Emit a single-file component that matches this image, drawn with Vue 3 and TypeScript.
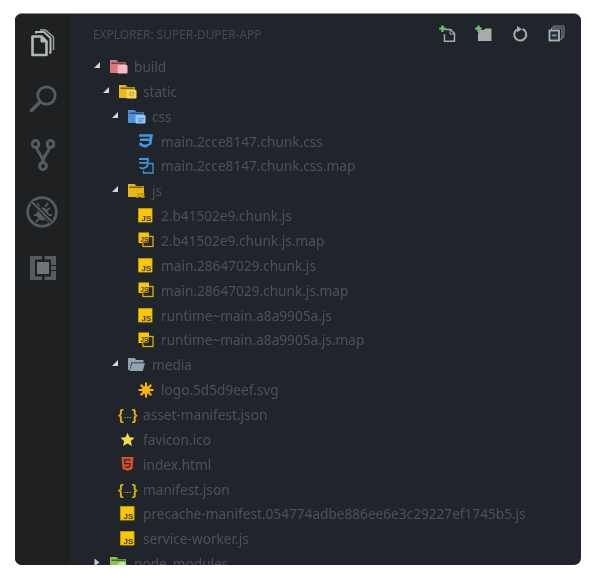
<script setup lang="ts">
type Row = { name: string; depth: number; icon: string; open?: boolean; folder?: boolean };
const rows: Row[] = [
  { name: 'build', depth: 0, icon: 'f-build', folder: true, open: true },
  { name: 'static', depth: 1, icon: 'f-static', folder: true, open: true },
  { name: 'css', depth: 2, icon: 'f-css', folder: true, open: true },
  { name: 'main.2cce8147.chunk.css', depth: 3, icon: 'css' },
  { name: 'main.2cce8147.chunk.css.map', depth: 3, icon: 'cssmap' },
  { name: 'js', depth: 2, icon: 'f-js', folder: true, open: true },
  { name: '2.b41502e9.chunk.js', depth: 3, icon: 'js' },
  { name: '2.b41502e9.chunk.js.map', depth: 3, icon: 'jsmap' },
  { name: 'main.28647029.chunk.js', depth: 3, icon: 'js' },
  { name: 'main.28647029.chunk.js.map', depth: 3, icon: 'jsmap' },
  { name: 'runtime~main.a8a9905a.js', depth: 3, icon: 'js' },
  { name: 'runtime~main.a8a9905a.js.map', depth: 3, icon: 'jsmap' },
  { name: 'media', depth: 2, icon: 'f-media', folder: true, open: true },
  { name: 'logo.5d5d9eef.svg', depth: 3, icon: 'svg' },
  { name: 'asset-manifest.json', depth: 1, icon: 'json' },
  { name: 'favicon.ico', depth: 1, icon: 'star' },
  { name: 'index.html', depth: 1, icon: 'html' },
  { name: 'manifest.json', depth: 1, icon: 'json' },
  { name: 'precache-manifest.054774adbe886ee6e3c29227ef1745b5.js', depth: 1, icon: 'js' },
  { name: 'service-worker.js', depth: 1, icon: 'js' },
  { name: 'node_modules', depth: 0, icon: 'f-node', folder: true },
];
const folderColors: Record<string, [string, string]> = {
  'f-build': ['#d9777c', '#f7bcc1'],
  'f-static': ['#eab80f', '#f3d568'],
  'f-css': ['#4a90dc', '#9cc8f2'],
  'f-js': ['#eab80f', '#f5d44a'],
  'f-node': ['#8bc34a', '#c5e1a5'],
};
</script>

<template>
  <div class="page">
    <div class="window">
      <nav class="activity">
        <div class="act-item">
          <svg width="24" height="28" viewBox="0 0 24 28" fill="none" stroke="#b2b7b5" stroke-width="2.600">
            <path d="M1.500 7.500h9l5 5v13.500h-14z" stroke-linejoin="round" />
            <path d="M10 8v5h5.500" fill="#b2b7b5" stroke-width="1" />
            <path d="M5 4.500V3h8l6.500 6v14.500h-1.500" stroke-width="2" />
            <path d="M9 1h5.500l8 7v13" stroke-width="1.500" opacity=".85" />
          </svg>
        </div>
        <div class="act-item">
          <svg width="28" height="28" viewBox="0 0 28 28" fill="none" stroke="#545c5f">
            <circle cx="17.500" cy="10.500" r="8.700" stroke-width="2.800" />
            <path d="M11 17L2.500 25.500" stroke-width="3.800" stroke-linecap="round" />
          </svg>
        </div>
        <div class="act-item">
          <svg width="24" height="32" viewBox="0 0 24 32" fill="none" stroke="#545c5f" stroke-width="3">
            <circle cx="4.500" cy="5" r="3.400" />
            <circle cx="19.500" cy="5" r="3.400" />
            <circle cx="12" cy="27" r="3.400" />
            <path d="M5.500 8.500C6.500 14 12 16 12 23.500M18.500 8.500C17.500 14 12 16 12 23.500" />
          </svg>
        </div>
        <div class="act-item">
          <svg width="32" height="32" viewBox="0 0 32 32" fill="none" stroke="#545c5f" class="bug">
            <circle cx="16" cy="16" r="14.300" stroke-width="2.800" />
            <ellipse cx="16.500" cy="18" rx="6" ry="6.500" fill="#545c5f" stroke="none" />
            <path d="M11 7l3 4M22 7l-3 4M24 12l-4 3M26 19h-5M8 19h4M10 26l3-3M23 26l-3-3" stroke-width="1.800" />
            <path d="M6 6l20 20" stroke="#1e2022" stroke-width="4.500" />
            <path d="M5.500 5.500l21 21" stroke-width="2" />
          </svg>
        </div>
        <div class="act-item">
          <svg width="26" height="26" viewBox="0 0 26 26" fill="#545c5f">
            <path d="M0 1h12v3.500H5v17h7V25H0zM14.500 1H26v9h-5V4.500h-6.500zM14.500 21.500H21V16h5v9H14.500z" />
            <rect x="7" y="7" width="12" height="12" fill="#6e7679" />
            <rect x="21" y="11" width="5" height="4" />
          </svg>
        </div>
      </nav>

      <section class="sidebar">
        <header class="head">
          <span class="title">EXPLORER: SUPER-DUPER-APP</span>
          <div class="tools">
            <svg width="17" height="17" viewBox="0 0 17 17" fill="none">
              <path d="M5.500 4.500h6l4 4v7.800h-10v-7" stroke="#a8acab" stroke-width="1.500" />
              <path d="M11 4.500v4.500h4.500" stroke="#a8acab" stroke-width="1" />
              <path d="M3.500 0.500v6.500M0.200 3.700h6.500" stroke="#6cc26c" stroke-width="2.300" />
            </svg>
            <svg width="17" height="17" viewBox="0 0 17 17">
              <path d="M5 5h3.500l2-1.500h6v12.500H3V8z" fill="#a8acab" />
              <path d="M3.500 0.500v6.500M0.200 3.700h6.500" stroke="#6cc26c" stroke-width="2.300" fill="none" />
            </svg>
            <svg width="17" height="17" viewBox="0 0 17 17" fill="none">
              <path d="M10.500 4A6 6 0 1 1 5 4.500" stroke="#a8acab" stroke-width="2" />
              <path d="M5 1l5 3.200-5 3z" fill="#a8acab" />
            </svg>
            <svg width="17" height="17" viewBox="0 0 17 17" fill="none">
              <path d="M5.500 3V1h10.500v11h-2" stroke="#7f8382" stroke-width="1" />
              <path d="M3.500 5V3h10.500v11h-2" stroke="#8d9190" stroke-width="1" />
              <rect x="1.500" y="5.500" width="9.500" height="10" fill="#2a3038" stroke="#b0b4b3" stroke-width="1.800" />
              <rect x="4" y="9.500" width="4.500" height="1.800" fill="#4f9fe0" />
            </svg>
          </div>
        </header>

        <div class="tree">
          <div v-for="r in rows" :key="r.name" class="row" :class="r.folder ? `fd${r.depth}` : `d${r.depth}`">
            <span class="twist" v-if="r.folder">
              <svg width="8" height="8" viewBox="0 0 8 8">
                <path v-if="r.open" d="M7 1v6H1z" fill="#d4d4d4" />
                <path v-else d="M1.500 0.500L6.500 4.500 1.500 8z" fill="#c8c8c8" />
              </svg>
            </span>

            <span class="ico" :class="{ fileico: !r.folder }">
              <svg v-if="folderColors[r.icon]" width="18" height="15" viewBox="0 0 18 15">
                <path d="M0 1h6.500l2 2H16v11H0z" :fill="folderColors[r.icon][0]" />
                <path d="M1.500 3.500h14v1.400h-14z" fill="#20252b" opacity=".6" />
                <rect v-if="r.icon === 'f-build' || r.icon === 'f-static' || r.icon === 'f-css'" x="7.500" y="6" width="10" height="8.500" rx="1" :fill="folderColors[r.icon][1]" />
                <rect v-if="r.icon === 'f-css'" x="10" y="9" width="6" height="1.300" fill="#4a90dc" />
                <rect v-if="r.icon === 'f-css'" x="10" y="11.500" width="5" height="1.300" fill="#4a90dc" />
                <circle v-if="r.icon === 'f-static'" cx="12.500" cy="10" r="2" fill="none" stroke="#c99d08" />
                <text v-if="r.icon === 'f-js'" x="7.500" y="14.500" class="jstxt" font-size="8" fill="#a98a10">JS</text>
                <circle v-if="r.icon === 'f-node'" cx="12" cy="11" r="5" :fill="folderColors[r.icon][1]" />
              </svg>

              <svg v-else-if="r.icon === 'f-media'" width="18" height="15" viewBox="0 0 18 15">
                <path d="M0 1h6.500l2 2H15.500v2.500H3.500L1.500 13H0z" fill="#90a4ae" />
                <path d="M4.200 6.200H17L14.700 14H1.500z" fill="#90a4ae" />
              </svg>

              <svg v-else-if="r.icon === 'js'" width="15" height="15" viewBox="0 0 15 15">
                <rect x="0.300" y="0.300" width="13.800" height="13.800" fill="#fbc800" stroke="#bf9a08" stroke-width=".6" />
                <text x="3.600" y="13" class="jstxt" font-size="8" fill="#3b3410">JS</text>
              </svg>

              <svg v-else-if="r.icon === 'jsmap'" width="16" height="16" viewBox="0 0 16 16">
                <rect x="5" y="4.500" width="10" height="10" fill="none" stroke="#dcb007" stroke-width="1.300" />
                <rect x="0.500" y="0.500" width="10.500" height="10.500" fill="#fbc800" />
                <path d="M11 5v6H5" stroke="#20252b" stroke-width="1" fill="none" />
                <text x="2.300" y="9.500" class="jstxt" font-size="6.800" fill="#3b3410">JS</text>
              </svg>

              <svg v-else-if="r.icon === 'css'" width="15" height="15" viewBox="0 0 15 15">
                <path d="M1.200 0.300H15L13.500 10.200 7.500 13.700 1.500 11.800 1.200 8.800h2.800l.2 1 3.100.9 3.500-1.200.4-2.500H1.800l.4-2.500h9.400l.3-1.700H1z" fill="#3f95e0" />
              </svg>

              <svg v-else-if="r.icon === 'cssmap'" width="16" height="16" viewBox="0 0 16 16" fill="none">
                <path d="M10 5.500H15V15H5.500v-2.500" stroke="#3f95e0" stroke-width="1.300" />
                <path d="M1 1h9l-.8 7.500-4.200 2-3.500-1M1.200 4.800h7.500" stroke="#3f95e0" stroke-width="1.800" />
              </svg>

              <svg v-else-if="r.icon === 'svg'" width="16" height="16" viewBox="0 0 16 16">
                <g stroke="#ffb300" stroke-width="2">
                  <path d="M8 0.500v15M0.500 8h15M2.700 2.700l10.600 10.600M13.300 2.700L2.700 13.300" />
                </g>
                <circle cx="8" cy="8" r="4" fill="#ffb300" />
              </svg>

              <svg v-else-if="r.icon === 'star'" width="15" height="15" viewBox="0 0 16 16">
                <path d="M8 0.800l2.200 4.800 5.300.6-3.900 3.500 1.100 5.200L8 12.300l-4.700 2.600 1.100-5.200L.5 6.200l5.300-.6z" fill="#f6d94a" />
              </svg>

              <svg v-else-if="r.icon === 'html'" class="html" width="13" height="16" viewBox="0 0 14 16">
                <path d="M0.500 0.500h13L12.400 13.500 7 15.500 1.600 13.500z" fill="#d6502a" />
                <path d="M10.200 3.500H3.800l.3 4h5.600l-.3 3.300L7 11.500l-2.400-.7" fill="none" stroke="#3a2320" stroke-width="1.300" />
              </svg>

              <span v-else-if="r.icon === 'json'" class="json">{<i>…</i>}</span>
            </span>

            <span class="name">{{ r.name }}</span>
          </div>
        </div>
      </section>
    </div>
  </div>
</template>

<style>
html, body { margin: 0; background: #fff; }
</style>

<style scoped>
.page {
  height: 577px;
  box-sizing: border-box;
  padding: 13px 19px 12px 15px;
  overflow: hidden;
}
.window {
  height: 552px;
  display: flex;
  border-radius: 7px;
  overflow: hidden;
  background: #20252b;
  border-top: 1px solid #8a8d8f;
  box-sizing: border-box;
  filter: blur(0.5px);
  font-family: "Noto Sans", sans-serif;
}
.activity {
  width: 55px;
  flex: none;
  background: #1e2022;
  padding-top: 1px;
  display: flex;
  flex-direction: column;
}
.act-item {
  height: 56.2px;
  display: flex;
  align-items: center;
  justify-content: center;
  flex: none;
}
.bug { margin-left: -1px; }
.sidebar {
  flex: 1;
  min-width: 0;
  display: flex;
  flex-direction: column;
}
.head {
  height: 40px;
  flex: none;
  display: flex;
  align-items: center;
  justify-content: space-between;
  padding: 0 16px 0 23px;
}
.title {
  font-size: 11.9px;
  color: #454b50;
  white-space: nowrap;
}
.tools {
  display: flex;
  gap: 19.5px;
  margin-top: -1px;
}
.tree {
  flex: none;
}
.row {
  height: 24.86px;
  display: flex;
  align-items: center;
  white-space: nowrap;
}
.fd0 { padding-left: 23px; }
.fd1 { padding-left: 32px; }
.fd2 { padding-left: 41px; }
.d1 { padding-left: 50px; }
.d3 { padding-left: 68px; }
.twist {
  width: 17px;
  flex: none;
  display: flex;
  margin-top: -3px;
}
.ico {
  width: 24px;
  flex: none;
  display: flex;
  align-items: center;
}
.fileico { width: 23px; }
.html { margin-left: 1px; }
.name {
  font-size: 13.65px;
  color: #4d5257;
}
.json {
  font-family: "Liberation Sans", sans-serif;
  font-weight: 700;
  font-size: 15px;
  color: #d8b10e;
  margin-left: -2px;
  display: inline-flex;
  align-items: center;
}
.json i {
  font-style: normal;
  font-size: 8px;
  width: 8px;
  text-align: center;
  margin-top: 3px;
}
.jstxt {
  font-family: "Liberation Sans", sans-serif;
  font-weight: 700;
}
</style>
